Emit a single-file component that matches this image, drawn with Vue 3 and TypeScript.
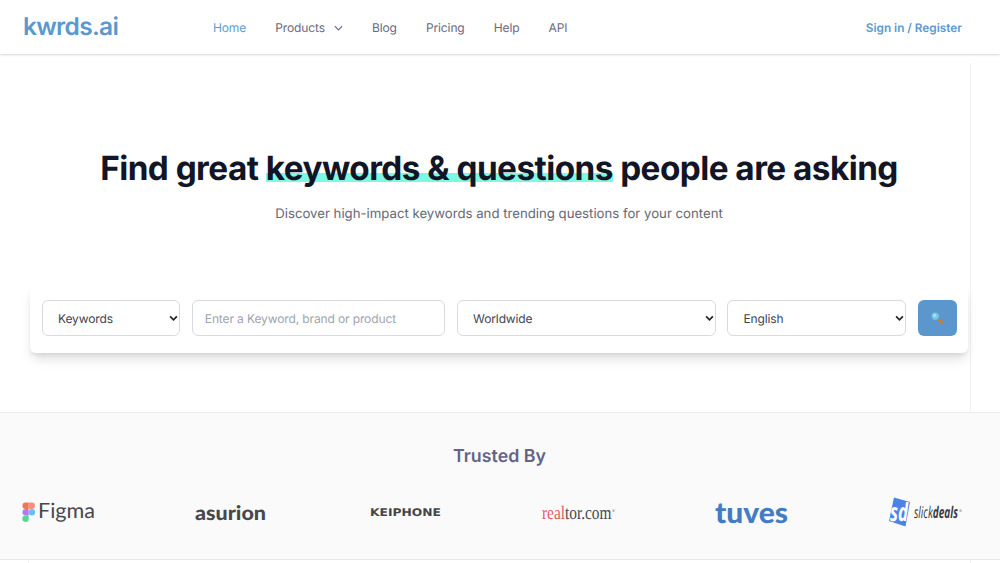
<template>
  <div class="page">
    <header class="navbar">
      <a class="brand">kwrds.ai</a>
      <nav class="nav-links">
        <a v-for="link in links" :key="link.label" class="nav-link" :class="{ active: link.active }">
          {{ link.label }}
          <svg v-if="link.menu" class="nav-chevron" viewBox="0 0 10 6">
            <path d="M1 1l4 4 4-4" />
          </svg>
        </a>
      </nav>
      <a class="sign-in">Sign in / Register</a>
    </header>

    <main class="hero">
      <h1 class="title">
        Find great <span class="highlight">keywords &amp; questions</span> people are asking
      </h1>
      <p class="subtitle">Discover high-impact keywords and trending questions for your content</p>

      <form class="search" @submit.prevent>
        <div class="field">
          <select v-model="mode" class="control">
            <option>Keywords</option>
          </select>
          <svg class="arrow" viewBox="0 0 8 6"><path d="M1 1.2l3 3 3-3" /></svg>
        </div>
        <input v-model="query" class="control" placeholder="Enter a Keyword, brand or product">
        <div class="field">
          <select v-model="country" class="control">
            <option>Worldwide</option>
          </select>
          <svg class="arrow" viewBox="0 0 8 6"><path d="M1 1.2l3 3 3-3" /></svg>
        </div>
        <div class="field">
          <select v-model="language" class="control">
            <option>English</option>
          </select>
          <svg class="arrow" viewBox="0 0 8 6"><path d="M1 1.2l3 3 3-3" /></svg>
        </div>
        <button class="submit" aria-label="Search">
          <svg viewBox="0 0 12 12" width="12" height="12">
            <path d="M6.6 6.8l1.4 1.3" stroke="#6c8791" stroke-width="1.3" />
            <path d="M8.8 8.6l1.6 1.5" stroke="#c87f3a" stroke-width="3.4" stroke-linecap="round" />
            <circle cx="4.3" cy="4.2" r="3.7" fill="#76c9e8" stroke="#68aacb" stroke-width=".5" />
            <circle cx="3.5" cy="3.3" r="1.6" fill="#a5e4f5" />
          </svg>
        </button>
      </form>
    </main>

    <section class="trusted">
      <h2 class="trusted-title">Trusted By</h2>
      <div class="logos">
        <svg class="logo" viewBox="0 0 73 36">
          <path d="M3.7 8.6h3v6.5h-3a3.25 3.25 0 010-6.5z" fill="#ee7654" />
          <path d="M6.7 8.6h3a3.25 3.25 0 010 6.5h-3z" fill="#fa8c83" />
          <path d="M3.7 15.1h3v6.4h-3a3.2 3.2 0 010-6.4z" fill="#b47af5" />
          <circle cx="9.9" cy="18.3" r="3.2" fill="#5fc3fa" />
          <path d="M3.7 21.5h3v3.2a3.2 3.2 0 11-3-3.2z" fill="#55d895" />
          <text class="figma" x="16" y="24" textLength="57" lengthAdjust="spacingAndGlyphs">Figma</text>
        </svg>
        <svg class="logo" viewBox="0 0 73 36">
          <text class="asurion" x="0" y="26" textLength="71" lengthAdjust="spacingAndGlyphs">asurion</text>
        </svg>
        <svg class="logo" viewBox="0 0 73 36">
          <text class="keiphone" x="1" y="22" textLength="71" lengthAdjust="spacingAndGlyphs">KEIPHONE</text>
        </svg>
        <svg class="logo" viewBox="0 0 73 36">
          <text class="realtor" x="0" y="24.5" textLength="69.5" lengthAdjust="spacingAndGlyphs"><tspan class="red">real</tspan>tor.com</text>
          <text class="mark" x="70" y="18">®</text>
        </svg>
        <svg class="logo" viewBox="0 0 73 36">
          <text class="tuves" x="-1" y="29" textLength="73" lengthAdjust="spacingAndGlyphs">tuves</text>
        </svg>
        <svg class="logo" viewBox="0 0 73 36">
          <path d="M5 3.5L21 8l-4.5 24.5L0 27z" fill="#4b83e9" />
          <text class="sd" x="1" y="27" textLength="18" lengthAdjust="spacingAndGlyphs">sd</text>
          <text class="slick" x="25" y="24" textLength="44" lengthAdjust="spacingAndGlyphs">slick<tspan class="deals">deals</tspan></text>
          <text class="mark" x="70" y="18">®</text>
        </svg>
      </div>
    </section>
    <div class="next-section"></div>
  </div>
</template>

<script setup lang="ts">
import { ref } from 'vue'

interface NavLink {
  label: string
  active?: boolean
  menu?: boolean
}

const links: NavLink[] = [
  { label: 'Home', active: true },
  { label: 'Products', menu: true },
  { label: 'Blog' },
  { label: 'Pricing' },
  { label: 'Help' },
  { label: 'API' }
]

const mode = ref('Keywords')
const query = ref('')
const country = ref('Worldwide')
const language = ref('English')
</script>

<style>
body {
  margin: 0;
  overflow: hidden;
  background: #fff;
}
</style>

<style scoped>
.page {
  height: 563px;
  overflow: hidden;
  font-family: Inter, "Liberation Sans", sans-serif;
  text-rendering: geometricPrecision;
  color: #6b6880;
}

.page * {
  box-sizing: border-box;
}

.navbar {
  display: flex;
  align-items: center;
  height: 54px;
  padding: 0 38px 0 23px;
  box-shadow: 0 1px 2px rgba(0, 0, 0, 0.16);
}

.brand {
  width: 190px;
  padding-bottom: 2px;
  font-size: 24.5px;
  font-weight: 600;
  letter-spacing: -0.7px;
  color: #5b98cf;
}

.nav-links {
  display: flex;
  gap: 29.1px;
}

.nav-link {
  display: flex;
  align-items: center;
  padding-top: 1px;
  font-size: 12px;
  line-height: 18px;
  letter-spacing: -0.12px;
}

.nav-link.active {
  color: #5b9dd3;
}

.nav-chevron {
  width: 9px;
  height: 6px;
  margin-left: 9px;
  fill: none;
  stroke: #6b6880;
  stroke-width: 1.3;
}

.sign-in {
  margin-left: auto;
  padding-top: 1px;
  font-size: 11.8px;
  font-weight: 600;
  color: #5b98cf;
}

.hero {
  height: 349px;
  width: 971px;
  margin-top: 9px;
  padding: 84px 2px 0 30px;
  border-right: 1px solid #f0f0f1;
}

.title {
  margin: 0;
  font-size: 33.3px;
  line-height: 44px;
  font-weight: 700;
  letter-spacing: -0.54px;
  color: #111525;
  text-align: center;
  white-space: nowrap;
}

.highlight {
  background: linear-gradient(#7cf8e3, #7cf8e3) 0 24px / 100% 9px no-repeat;
}

.subtitle {
  margin: 12px 0 0;
  font-size: 13.2px;
  line-height: 22px;
  color: #646975;
  text-align: center;
}

.search {
  display: grid;
  grid-template-columns: 138px 253.5px 258.5px 178.5px 39px;
  gap: 11.8px;
  height: 67px;
  margin-top: 61px;
  padding: 14px 12px;
  border-radius: 6px;
  background: #fff;
  box-shadow: 0 8px 12px -2px rgba(0, 0, 0, 0.12), 0 3px 5px -2px rgba(0, 0, 0, 0.1);
}

.field {
  position: relative;
}

.control {
  display: block;
  width: 100%;
  height: 36px;
  padding: 0 12px;
  border: 1px solid #d9dade;
  border-radius: 6px;
  outline: none;
  appearance: none;
  background: #fff;
  font-family: inherit;
  font-size: 12px;
  letter-spacing: -0.12px;
  text-rendering: inherit;
  color: #3e4453;
}

select.control {
  padding-left: 15px;
}

.control::placeholder {
  color: #a0a4ad;
  opacity: 1;
}

.arrow {
  position: absolute;
  top: 15px;
  right: 2px;
  width: 9px;
  height: 7px;
  fill: none;
  stroke: #22252c;
  stroke-width: 1.6;
}

.submit {
  display: flex;
  align-items: center;
  justify-content: center;
  height: 36px;
  padding: 0;
  border: 0;
  border-radius: 6px;
  background: #5b96cd;
}

.submit svg {
  fill: none;
}

.trusted {
  height: 148px;
  padding: 31px 38px 0 22px;
  border-top: 1px solid #ececee;
  border-bottom: 1px solid #e8e8ea;
  background: #fafafa;
}

.trusted-title {
  margin: 0 0 0 15px;
  font-size: 17.8px;
  line-height: 26px;
  font-weight: 600;
  color: #656386;
  text-align: center;
}

.logos {
  display: flex;
  justify-content: space-between;
  margin-top: 24px;
}

.logo {
  width: 73px;
  height: 36px;
  overflow: visible;
}

.figma {
  font: 21px Lato, sans-serif;
  fill: #48484b;
}

.asurion {
  font: 900 20px Lato, sans-serif;
  fill: #48484b;
}

.keiphone {
  font: 700 10.5px "DejaVu Sans", sans-serif;
  fill: #454548;
}

.realtor {
  font: 19px "Liberation Serif", serif;
  fill: #48484b;
}

.red {
  fill: #e15a60;
}

.mark {
  font: 4px "Liberation Sans", sans-serif;
  fill: #555;
}

.tuves {
  font: 900 29px Lato, sans-serif;
  fill: #437cc4;
}

.sd {
  font: italic 700 25px "Open Sans", sans-serif;
  fill: #fff;
}

.slick {
  font: italic 16px "Open Sans", sans-serif;
  fill: #39393c;
}

.deals {
  font-weight: 700;
}

.next-section {
  width: 943px;
  height: 10px;
  margin-left: 28px;
  border-right: 1px solid #f0f0f1;
  border-left: 1px solid #f0f0f1;
}
</style>
